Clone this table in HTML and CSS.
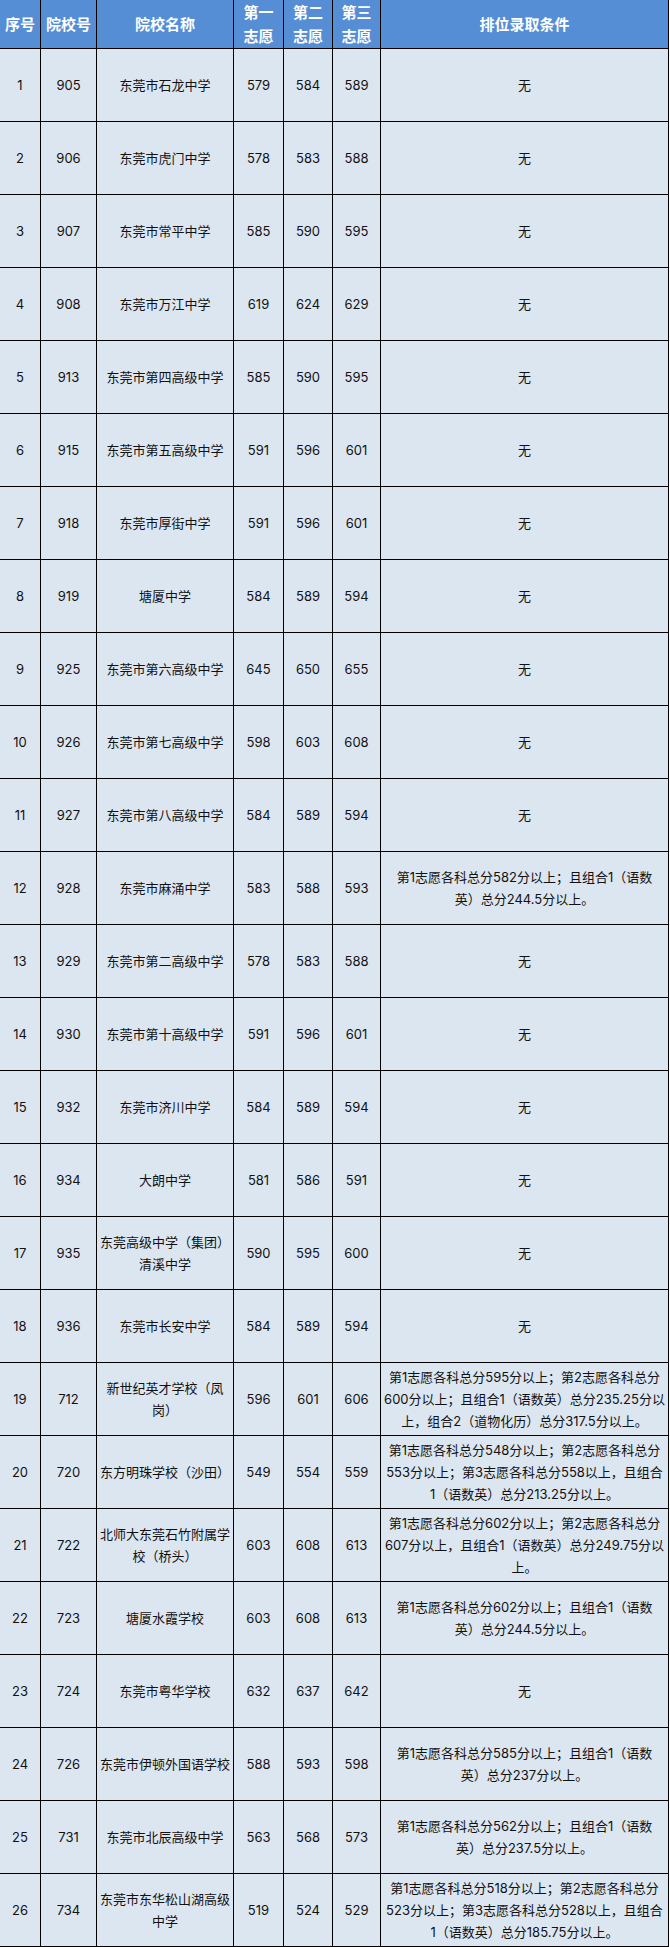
FILE: index.html
```html
<!DOCTYPE html>
<html lang="zh-CN">
<head>
<meta charset="utf-8">
<title>东莞市排位录取分数</title>
<link rel="stylesheet" href="styles.css">
</head>
<body>
<div class="sheet">
  <div class="cell head">序号</div>
  <div class="cell head">院校号</div>
  <div class="cell head">院校名称</div>
  <div class="cell head">第一<br>志愿</div>
  <div class="cell head">第二<br>志愿</div>
  <div class="cell head">第三<br>志愿</div>
  <div class="cell head">排位录取条件</div>

  <div class="cell">1</div><div class="cell">905</div><div class="cell name">东莞市石龙中学</div><div class="cell">579</div><div class="cell">584</div><div class="cell">589</div><div class="cell cond">无</div>
  <div class="cell">2</div><div class="cell">906</div><div class="cell name">东莞市虎门中学</div><div class="cell">578</div><div class="cell">583</div><div class="cell">588</div><div class="cell cond">无</div>
  <div class="cell">3</div><div class="cell">907</div><div class="cell name">东莞市常平中学</div><div class="cell">585</div><div class="cell">590</div><div class="cell">595</div><div class="cell cond">无</div>
  <div class="cell">4</div><div class="cell">908</div><div class="cell name">东莞市万江中学</div><div class="cell">619</div><div class="cell">624</div><div class="cell">629</div><div class="cell cond">无</div>
  <div class="cell">5</div><div class="cell">913</div><div class="cell name">东莞市第四高级中学</div><div class="cell">585</div><div class="cell">590</div><div class="cell">595</div><div class="cell cond">无</div>
  <div class="cell">6</div><div class="cell">915</div><div class="cell name">东莞市第五高级中学</div><div class="cell">591</div><div class="cell">596</div><div class="cell">601</div><div class="cell cond">无</div>
  <div class="cell">7</div><div class="cell">918</div><div class="cell name">东莞市厚街中学</div><div class="cell">591</div><div class="cell">596</div><div class="cell">601</div><div class="cell cond">无</div>
  <div class="cell">8</div><div class="cell">919</div><div class="cell name">塘厦中学</div><div class="cell">584</div><div class="cell">589</div><div class="cell">594</div><div class="cell cond">无</div>
  <div class="cell">9</div><div class="cell">925</div><div class="cell name">东莞市第六高级中学</div><div class="cell">645</div><div class="cell">650</div><div class="cell">655</div><div class="cell cond">无</div>
  <div class="cell">10</div><div class="cell">926</div><div class="cell name">东莞市第七高级中学</div><div class="cell">598</div><div class="cell">603</div><div class="cell">608</div><div class="cell cond">无</div>
  <div class="cell">11</div><div class="cell">927</div><div class="cell name">东莞市第八高级中学</div><div class="cell">584</div><div class="cell">589</div><div class="cell">594</div><div class="cell cond">无</div>
  <div class="cell">12</div><div class="cell">928</div><div class="cell name">东莞市麻涌中学</div><div class="cell">583</div><div class="cell">588</div><div class="cell">593</div><div class="cell cond">第1志愿各科总分582分以上；且组合1（语数<br>英）总分244.5分以上。</div>
  <div class="cell">13</div><div class="cell">929</div><div class="cell name">东莞市第二高级中学</div><div class="cell">578</div><div class="cell">583</div><div class="cell">588</div><div class="cell cond">无</div>
  <div class="cell">14</div><div class="cell">930</div><div class="cell name">东莞市第十高级中学</div><div class="cell">591</div><div class="cell">596</div><div class="cell">601</div><div class="cell cond">无</div>
  <div class="cell">15</div><div class="cell">932</div><div class="cell name">东莞市济川中学</div><div class="cell">584</div><div class="cell">589</div><div class="cell">594</div><div class="cell cond">无</div>
  <div class="cell">16</div><div class="cell">934</div><div class="cell name">大朗中学</div><div class="cell">581</div><div class="cell">586</div><div class="cell">591</div><div class="cell cond">无</div>
  <div class="cell">17</div><div class="cell">935</div><div class="cell name">东莞高级中学（集团）<br>清溪中学</div><div class="cell">590</div><div class="cell">595</div><div class="cell">600</div><div class="cell cond">无</div>
  <div class="cell">18</div><div class="cell">936</div><div class="cell name">东莞市长安中学</div><div class="cell">584</div><div class="cell">589</div><div class="cell">594</div><div class="cell cond">无</div>
  <div class="cell">19</div><div class="cell">712</div><div class="cell name">新世纪英才学校（凤<br>岗）</div><div class="cell">596</div><div class="cell">601</div><div class="cell">606</div><div class="cell cond">第1志愿各科总分595分以上；第2志愿各科总分<br>600分以上；且组合1（语数英）总分235.25分以<br>上，组合2（道物化历）总分317.5分以上。</div>
  <div class="cell">20</div><div class="cell">720</div><div class="cell name">东方明珠学校（沙田）</div><div class="cell">549</div><div class="cell">554</div><div class="cell">559</div><div class="cell cond">第1志愿各科总分548分以上；第2志愿各科总分<br>553分以上；第3志愿各科总分558以上，且组合<br>1（语数英）总分213.25分以上。</div>
  <div class="cell">21</div><div class="cell">722</div><div class="cell name">北师大东莞石竹附属学<br>校（桥头）</div><div class="cell">603</div><div class="cell">608</div><div class="cell">613</div><div class="cell cond">第1志愿各科总分602分以上；第2志愿各科总分<br>607分以上，且组合1（语数英）总分249.75分以<br>上。</div>
  <div class="cell">22</div><div class="cell">723</div><div class="cell name">塘厦水霞学校</div><div class="cell">603</div><div class="cell">608</div><div class="cell">613</div><div class="cell cond">第1志愿各科总分602分以上；且组合1（语数<br>英）总分244.5分以上。</div>
  <div class="cell">23</div><div class="cell">724</div><div class="cell name">东莞市粤华学校</div><div class="cell">632</div><div class="cell">637</div><div class="cell">642</div><div class="cell cond">无</div>
  <div class="cell">24</div><div class="cell">726</div><div class="cell name">东莞市伊顿外国语学校</div><div class="cell">588</div><div class="cell">593</div><div class="cell">598</div><div class="cell cond">第1志愿各科总分585分以上；且组合1（语数<br>英）总分237分以上。</div>
  <div class="cell">25</div><div class="cell">731</div><div class="cell name">东莞市北辰高级中学</div><div class="cell">563</div><div class="cell">568</div><div class="cell">573</div><div class="cell cond">第1志愿各科总分562分以上；且组合1（语数<br>英）总分237.5分以上。</div>
  <div class="cell">26</div><div class="cell">734</div><div class="cell name">东莞市东华松山湖高级<br>中学</div><div class="cell">519</div><div class="cell">524</div><div class="cell">529</div><div class="cell cond">第1志愿各科总分518分以上；第2志愿各科总分<br>523分以上；第3志愿各科总分528以上，且组合<br>1（语数英）总分185.75分以上。</div>
</div>
</body>
</html>
```
FILE: styles.css
```css
html, body {
  margin: 0;
  padding: 0;
  background: #ffffff;
}

.sheet {
  display: grid;
  width: max-content;
  grid-template-columns: 40px 55px 136px 49px 48px 47px 287px;
  grid-template-rows: 48px repeat(26, 72px);
  gap: 1px;
  padding: 0 1px 1px 0;
  background: #000000;
}

.cell {
  display: flex;
  align-items: center;
  justify-content: center;
  text-align: center;
  background: #dce6f1;
  color: #111111;
  font-family: "Inter", "Noto Sans CJK SC", sans-serif;
  font-size: 13px;
  line-height: 22px;
  padding: 0 1px;
}

.head {
  background: #558ed5;
  color: #ffffff;
  font-family: "Noto Sans CJK SC", sans-serif;
  font-weight: bold;
  font-size: 15px;
  line-height: 24px;
  white-space: nowrap;
}

.name {
  white-space: nowrap;
}

.cond {
  white-space: nowrap;
  padding: 0;
}
```
